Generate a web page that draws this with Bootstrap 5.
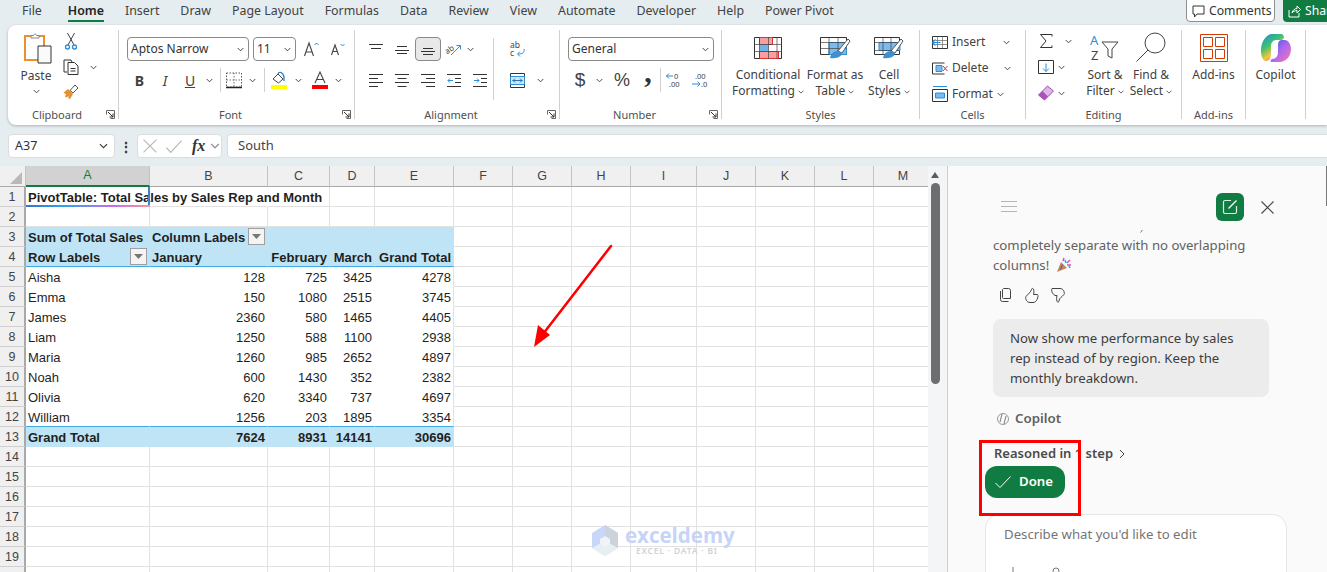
<!DOCTYPE html>
<html lang="en">
<head>
<meta charset="UTF-8" />
<title>PivotTable - Excel</title>
<link href="https://cdn.jsdelivr.net/npm/bootstrap@5.3.0/dist/css/bootstrap.min.css" rel="stylesheet" />
<style>
  html, body { height: 100%; overflow: hidden; }
  body { background: #e6edf0; font-family: "Noto Sans", sans-serif; font-size: 12px; color: #424242; width: 1327px; height: 572px; position: relative; }
  svg { display: block; flex: none; overflow: visible; }

  /* top tabs */
  .tabbar { height: 25px; padding-left: 22px; }
  .tabbar .nav-link { padding: 0; margin-right: 21px; height: 22px; line-height: 21px; color: #424242; font-size: 12.4px; }
  .tabbar .nav-item:first-child .nav-link { margin-right: 26px; }
  .tabbar .nav-link.active { color: #242424; font-weight: 600; border-bottom: 2px solid #107c41; }
  .btn-comments { position: absolute; left: 1186px; top: -3px; width: 89px; height: 25px; padding: 3px 0 0 5px; background: #fff; border: 1px solid #8f8f8f; border-radius: 4px; font-size: 12.2px; color: #333; line-height: 20px; }
  .btn-share { position: absolute; left: 1283px; top: -3px; width: 60px; height: 25px; padding: 3px 0 0 5px; background: #107c41; border-radius: 4px; font-size: 12.2px; color: #fff; line-height: 20px; }

  /* ribbon */
  .ribbon { display: flex; height: 100px; margin-left: 8px; padding: 5px 0 6px; background: #fff; border-radius: 8px 0 0 8px; box-shadow: 0 1px 3px rgba(0,0,0,.25); }
  .rgroup { position: relative; display: flex; flex-direction: column; flex: none; border-right: 1px solid #d0d0d0; }
  .rbody { flex: 1 1 auto; min-height: 0; }
  .rlabel { height: 14px; line-height: 14px; margin: -1px 0 -3px; text-align: center; font-size: 11px; color: #505050; }
  .rlabel-pad { padding-right: 12px; }
  .launcher { position: absolute; right: 3px; bottom: 0; }
  .g-clip { width: 111px; } .g-font { width: 236px; } .g-align { width: 205px; } .g-num { width: 162px; }
  .g-styles { width: 198px; } .g-cells { width: 106px; } .g-edit { width: 156px; } .g-addin { width: 64px; } .g-copilot { width: 60px; }
  .ctext { font-size: 12px; line-height: 16px; color: #424242; text-align: center; white-space: nowrap; }
  .big { display: flex; flex-direction: column; align-items: center; }
  .xlsel { display: flex; align-items: center; justify-content: space-between; height: 24px; background: #fff; border: 1px solid #8a8a8a; border-radius: 4px; padding: 0 4px 0 3px; font-size: 12px; color: #333; }
  .tb { display: flex; align-items: center; justify-content: center; flex: none; height: 24px; color: #424242; font-size: 14px; }
  .vsep { width: 1px; height: 24px; background: #d0d0d0; flex: none; }
  .tb-on { background: #e8e8e8; border: 1px solid #8a8a8a; border-radius: 4px; }
  .rowtop { height: 24px; margin-top: 7px; }
  .rowlow { height: 24px; margin-top: 7px; }
  .w14 { width: 14px; } .w16 { width: 16px; } .w20 { width: 20px; } .w22 { width: 22px; } .w24 { width: 24px; } .w25 { width: 25px; } .w26 { width: 26px; } .w28 { width: 28px; }
  .w8 { width: 8px; }
  .clip-paste { width: 51px; padding-left: 5px; }
  .paste-ico { margin: 3px 0 5px 4px; }
  .paste-chev { margin-top: 5px; }
  .clip-small { width: 24px; padding-top: 3px; gap: 9px; }
  .clip-chev { margin: 35px 0 0 7px; }
  .chev-back { margin-left: -4px; }
  .merge-chev { margin-left: 12px; }
  .cur-glyph { font-family: "Liberation Sans", sans-serif; font-size: 19px; }
  .pct-glyph { font-family: "Liberation Sans", sans-serif; font-size: 18px; margin-left: 2px; }
  .comma-glyph { font-family: "Liberation Serif", serif; font-weight: 700; font-size: 30px; line-height: 0; padding-bottom: 16px; color: #333; }
  .ico-st { margin: 7px 0 8px; }
  .ico-ed { margin: 3px 0 5px; }
  .ico-ad { margin: 4px 0 5px; }
  .cell-stack { margin-top: -1px; }
  .ed-stack { margin-top: -2px; padding-left: 12px; width: 56px; }
  .cell-row { height: 26px; padding-left: 12px; font-size: 12px; gap: 4px; color: #424242; }
  .ed-row { height: 26px; }
  .chev-ins { margin-left: 14px; } .chev-del { margin-left: 11px; } .chev-fmt { margin-left: 0; }
  .sig { margin-left: 2px; } .chev-sig { margin-left: 13px; } .chev-ed { margin-left: 4px; }

  /* formula bar */
  .fbar { height: 24px; margin: 9px 0 8px 8px; gap: 0; }
  .fbox { height: 24px; background: #fff; border: 1px solid #dcdcdc; border-radius: 4px; flex: none; }
  .namebox { width: 107px; padding: 0 6px 0 6px; font-size: 12.5px; color: #333; }
  .fnbtns { width: 85px; margin-left: 9px; padding-left: 5px; }
  .fxinput { width: 1120px; margin-left: 5px; padding-left: 10px; font-size: 13px; color: #444; }
  .fn-dots { width: 22px; font-size: 14px; font-weight: 700; color: #333; text-align: center; margin-right: -9px; flex: none; }
  .fx { font-family: "Liberation Serif", serif; font-style: italic; font-weight: 700; font-size: 16px; color: #333; margin: 0 5px 0 9px; }

  /* sheet */
  .main { height: 406px; }
  .sheet-wrap { width: 928px; height: 406px; overflow: hidden; background: #fff; flex: none; }
  .xl-sheet { table-layout: fixed; border-collapse: separate; border-spacing: 0; width: 908px; font-family: "Liberation Sans", sans-serif; font-size: 13px; color: #1f1f1f; }
  .xl-sheet td, .xl-sheet th { height: 20px; padding: 2px 2px 0 2px; line-height: 17px; white-space: nowrap; border-right: 1px solid #e1e1e1; border-bottom: 1px solid #e1e1e1; font-weight: 400; }
  .xl-sheet thead th { text-align: center; background: #f0f0f0; color: #444; font-size: 12.5px; border-right: 1px solid #c4c4c4; border-bottom: 1px solid #a9a9a9; padding: 0; line-height: 19px; }
  .xl-sheet thead th.col-on { background: #d2d2d2; color: #107c41; border-bottom: 2px solid #107c41; }
  .xl-sheet thead th.corner { position: relative; }
  .xl-sheet .rowhead { background: #f0f0f0; text-align: center; color: #444; font-size: 12.5px; padding: 2px 0 0; border-right: 2px solid #a9a9a9; border-bottom: 1px solid #cfcfcf; }
  .xl-sheet td.plain { border-color: #fff; }
  .xl-sheet td.noline-r { border-right-color: #fff; }
  .xl-sheet td.edge { border-right-color: #e1e1e1; border-bottom-color: #fff; }
  .xl-sheet td.pv { background: #bfe4f6; border-right-color: #bfe4f6; border-bottom-color: #bfe4f6; font-weight: 700; }
  .xl-sheet td.pv-end { border-bottom-color: #3fa9e6; }
  .xl-sheet td.before-total { border-bottom-color: #3fa9e6; }
  .xl-sheet td.num { text-align: right; }
  .xl-sheet td.a1-cell { position: relative; font-weight: 700; }
  .a1-cell::after { content: ""; position: absolute; left: 0; right: -1px; bottom: -1px; height: 2px; background: linear-gradient(90deg, #3f6fc8, #2aa4ee 30%, #c86bf0 70%, #f59a8c); }
  .a1-cell::before { content: ""; position: absolute; right: -1px; top: 0; bottom: -1px; width: 2px; background: #3f7fd0; }
  .fltbtn { float: right; display: flex; align-items: center; justify-content: center; width: 17px; height: 17px; margin-top: -1px; background: #f4f4f4; border: 1px solid #9f9f9f; }
  .xl-corner { position: absolute; right: 3px; bottom: 2px; width: 0; height: 0; border-left: 12px solid transparent; border-bottom: 12px solid #b9b9b9; }

  .vscroll { width: 19px; height: 406px; background: #f3f5f6; flex: none; position: relative; }
  .vthumb { width: 9px; height: 201px; margin: 5px 0 0 3px; background: #6e6e6e; border-radius: 5px; }
  .varrow { width: 0; height: 0; margin: 6px 0 0 3px; border-left: 4.5px solid transparent; border-right: 4.5px solid transparent; border-bottom: 6px solid #5c5c5c; }

  /* copilot pane */
  .pane { width: 380px; height: 406px; background: #fafafa; border-left: 1px solid #c9cfd2; overflow: hidden; position: relative; font-size: 13.3px; flex: none; }
  .pane-head { height: 64px; padding: 27px 53px 0 53px; position: relative; }
  .pane-new { width: 28px; height: 28px; background: #107c41; border-radius: 6px; margin-left: auto; margin-right: 17px; }
  .pane-msg { color: #616161; line-height: 20px; padding-left: 45px; width: 340px; font-size: 13.2px; }
  .pane-tail { height: 5px; padding-left: 192px; }
  .pane-acts { gap: 8px; padding: 13px 0 0 51px; height: 44px; }
  .bubble { width: 276px; height: 78px; margin-left: 45px; padding: 9px 10px 0 17px; background: #ececec; border-radius: 8px; color: #3d3d3d; line-height: 20px; font-size: 13.2px; }
  .pane-who { height: 20px; margin: 12px 0 0 45px; gap: 6px; color: #616161; font-weight: 600; font-size: 13.3px; }
  .pane-reason { height: 18px; overflow: hidden; margin: 15px 0 0 46px; color: #4a4a4a; font-weight: 600; font-size: 13px; line-height: 19px; gap: 6px; align-items: flex-start; }
  .reason-chev { margin-top: 5px; }
  .btn-done { width: 80px; height: 32px; margin: 4px 0 0 37px; padding: 0 2px 0 0; gap: 8px; background: #107c41; border: 0; border-radius: 12px; color: #fff; font-weight: 600; font-size: 13.2px; }
  .ask-box { width: 302px; height: 100px; margin: 16px 0 0 37px; padding: 10px 18px; background: #fff; border: 1px solid #e6e6e6; border-radius: 14px; color: #757575; font-size: 13.2px; }
  .ask-tools { margin-top: 22px; gap: 38px; padding-left: 8px; }
  .red-box { position: absolute; left: 979px; top: 440px; width: 102px; height: 76px; border: 3px solid #f00; pointer-events: none; }
  .pointer-arrow { position: absolute; left: 525px; top: 240px; }
  .watermark { position: absolute; left: 591px; top: 524px; gap: 4px; pointer-events: none; }
  .wm-name { font-family: "Open Sans", sans-serif; font-weight: 700; font-size: 20.5px; line-height: 22px; color: #c6d4f7; }
  .wm-tag { font-size: 8.5px; line-height: 9px; letter-spacing: .8px; color: #cfd2d7; font-weight: 600; padding-left: 11px; }
  .pane-rail { position: absolute; right: 0; top: 0; width: 1px; height: 40px; background: #777; }
</style>
</head>
<body>
<svg width="0" height="0" class="position-absolute">
  <symbol id="chev" viewBox="0 0 8 5"><path d="M.8.8 4 4l3.2-3.2" fill="none" stroke="#444" stroke-width="1.1"/></symbol>
  <symbol id="launch" viewBox="0 0 9 9"><path d="M.5 4.5v-4h8v8h-4" fill="none" stroke="#666"/><path d="M2 2l5 5M7 3.5V7H3.5" fill="none" stroke="#333"/></symbol>
</svg>

<div class="tabbar d-flex">
  <ul class="nav flex-nowrap">
    <li class="nav-item"><a class="nav-link" href="#">File</a></li>
    <li class="nav-item"><a class="nav-link active" href="#">Home</a></li>
    <li class="nav-item"><a class="nav-link" href="#">Insert</a></li>
    <li class="nav-item"><a class="nav-link" href="#">Draw</a></li>
    <li class="nav-item"><a class="nav-link" href="#">Page Layout</a></li>
    <li class="nav-item"><a class="nav-link" href="#">Formulas</a></li>
    <li class="nav-item"><a class="nav-link" href="#">Data</a></li>
    <li class="nav-item"><a class="nav-link" href="#">Review</a></li>
    <li class="nav-item"><a class="nav-link" href="#">View</a></li>
    <li class="nav-item"><a class="nav-link" href="#">Automate</a></li>
    <li class="nav-item"><a class="nav-link" href="#">Developer</a></li>
    <li class="nav-item"><a class="nav-link" href="#">Help</a></li>
    <li class="nav-item"><a class="nav-link" href="#">Power Pivot</a></li>
  </ul>
  <div class="btn-comments d-flex align-items-center gap-1">
    <svg width="13" height="13" viewBox="0 0 13 13"><path d="M1 1h11v8H5l-2.5 3V9H1z" fill="none" stroke="#333"/></svg>
    Comments
  </div>
  <div class="btn-share d-flex align-items-center gap-1">
    <svg width="13" height="13" viewBox="0 0 13 13"><path d="M1 5v7h10V8M4 8c.5-3 3-4.500 5-4.500V1l3.500 3.500L9 8V5.500C7 5.500 5 6.500 4 8z" fill="none" stroke="#fff"/></svg>
    Share
  </div>
</div>

<!-- Ribbon -->
<div class="ribbon">
  <div class="rgroup g-clip">
    <div class="rbody d-flex">
      <div class="clip-paste big">
        <svg class="paste-ico" width="28" height="30" viewBox="0 0 28 30">
          <path d="M1 3h19v24H1z" fill="#fff" stroke="#e8912d" stroke-width="2"/>
          <path d="M7 5V2.500h2.500C10 .5 12 .5 12.500 2.500H15V5z" fill="#fff" stroke="#888"/>
          <path d="M14 13h13v17H14z" fill="#fafafa" stroke="#333"/>
        </svg>
        <span class="ctext">Paste</span>
        <svg class="paste-chev" width="7" height="5"><use href="#chev"/></svg>
      </div>
      <div class="clip-small d-flex flex-column align-items-center">
        <svg width="12" height="17" viewBox="0 0 12 17"><path d="M2.500 0 9 12M9.500 0 3 12" stroke="#444" fill="none"/><circle cx="2.500" cy="14" r="2" fill="none" stroke="#2a8ed8" stroke-width="1.300"/><circle cx="9.500" cy="14" r="2" fill="none" stroke="#2a8ed8" stroke-width="1.300"/></svg>
        <svg width="16" height="16" viewBox="0 0 16 16"><path d="M4 13H1V1h7l1 2" fill="none" stroke="#333"/><path d="M5 3.500h6.500L15 7v8.500H5z" fill="#fff" stroke="#333"/><path d="M7.500 9.500h5M7.500 12h5" stroke="#333"/></svg>
        <svg width="16" height="16" viewBox="0 0 16 16"><path d="M.5 8.500 5 5l5 5-3 5-2-1 1-2-3 1.500-1-1 1-2z" fill="#e8912d"/><path d="m7 6.500 5-5.500 3 3-5 5z" fill="none" stroke="#555"/></svg>
      </div>
      <svg class="clip-chev" width="7" height="5"><use href="#chev"/></svg>
    </div>
    <div class="rlabel rlabel-pad">Clipboard</div>
    <svg class="launcher" width="9" height="9"><use href="#launch"/></svg>
  </div>

  <div class="rgroup g-font">
    <div class="rbody ps-2">
      <div class="d-flex align-items-center rowtop">
        <div class="xlsel" style="width:122px">Aptos Narrow <svg width="7" height="5"><use href="#chev"/></svg></div>
        <div class="xlsel ms-1" style="width:43px">11 <svg width="7" height="5"><use href="#chev"/></svg></div>
        <svg class="ms-2" width="15" height="14" viewBox="0 0 15 14"><path d="M.5 14 5 1l4.500 13M2 10h6" fill="none" stroke="#444" stroke-width="1.100"/><path d="m10.500 3 2-2 2 2" fill="none" stroke="#2a8ed8"/></svg>
        <svg class="ms-2 ps-1" width="18" height="12" viewBox="0 0 14 12"><path d="M.5 12 4 2l3.500 10M1.800 8.500h4.500" fill="none" stroke="#444" stroke-width="1.100"/><path d="m9.500 1 2 2 2-2" fill="none" stroke="#2a8ed8"/></svg>
      </div>
      <div class="d-flex align-items-center rowlow">
        <div class="tb w25 fw-bold">B</div>
        <div class="tb w26 fst-italic">I</div>
        <div class="tb w24 text-decoration-underline">U</div>
        <div class="tb w14"><svg width="7" height="5"><use href="#chev"/></svg></div>
        <div class="tb w8"><span class="vsep"></span></div>
        <div class="tb w20"><svg width="16" height="17" viewBox="0 0 16 17"><path d="M.5 1h15v14H.5z" fill="none" stroke="#555" stroke-dasharray="1.500 1.500"/><path d="M.5 8h15M8 1v14" stroke="#777" stroke-dasharray="1.500 1.500"/><path d="M0 15.500h16" stroke="#222" stroke-width="1.500"/></svg></div>
        <div class="tb w16"><svg width="7" height="5"><use href="#chev"/></svg></div>
        <div class="tb w8"><span class="vsep"></span></div>
        <div class="tb w22"><svg width="16" height="18" viewBox="0 0 16 18"><path d="m2 8 5-5 5 5-4.500 4z" fill="#fff" stroke="#444"/><path d="M7 3c1-3 5-2 6 3v4" fill="none" stroke="#1f7fcc" stroke-width="1.300"/><path d="M0 14h16v4H0z" fill="#ff0"/></svg></div>
        <div class="tb w16"><svg width="7" height="5"><use href="#chev"/></svg></div>
        <div class="tb w28"><svg width="16" height="18" viewBox="0 0 16 18"><path d="M3 12 8 1l5 11M4.500 8.500h7" fill="none" stroke="#444" stroke-width="1.100"/><path d="M0 14h16v4H0z" fill="#f00"/></svg></div>
        <div class="tb w8"><svg width="7" height="5"><use href="#chev"/></svg></div>
      </div>
    </div>
    <div class="rlabel rlabel-pad">Font</div>
    <svg class="launcher" width="9" height="9"><use href="#launch"/></svg>
  </div>

  <div class="rgroup g-align">
    <div class="rbody d-flex ps-2">
      <div class="al-left flex-none" style="width:134px">
        <div class="d-flex align-items-center rowtop">
          <div class="tb w26"><svg width="14" height="10" viewBox="0 0 14 10"><path d="M0 .5h14M2 4.500h10" stroke="#333"/></svg></div>
          <div class="tb w26"><svg width="14" height="10" viewBox="0 0 14 10"><path d="M2 2.500h10M0 6.500h14M2 9.500h10" stroke="#333"/></svg></div>
          <div class="tb w26 tb-on"><svg width="14" height="12" viewBox="0 0 14 12"><path d="M2 5.500h10M0 8.500h14M2 11.500h10" stroke="#333"/></svg></div>
          <div class="tb w26"><svg width="16" height="14" viewBox="0 0 16 14"><text x="-1" y="10" font-size="8" fill="#444" transform="rotate(-35 4 8)">ab</text><path d="m5 13 9-9M10.500 3.500h4v4" fill="none" stroke="#2a8ed8"/></svg></div>
          <div class="tb w14 chev-back"><svg width="7" height="5"><use href="#chev"/></svg></div>
        </div>
        <div class="d-flex align-items-center rowlow">
          <div class="tb w26"><svg width="14" height="13" viewBox="0 0 14 13"><path d="M0 .5h14M0 4.500h9M0 8.500h14M0 12.500h9" stroke="#333"/></svg></div>
          <div class="tb w26"><svg width="14" height="13" viewBox="0 0 14 13"><path d="M0 .5h14M2.500 4.500h9M0 8.500h14M2.500 12.500h9" stroke="#333"/></svg></div>
          <div class="tb w26"><svg width="14" height="13" viewBox="0 0 14 13"><path d="M0 .5h14M5 4.500h9M0 8.500h14M5 12.500h9" stroke="#333"/></svg></div>
          <div class="tb w26"><svg width="14" height="13" viewBox="0 0 14 13"><path d="M0 .5h14M8 4.500h6M8 8.500h6M0 12.500h14" stroke="#333"/><path d="M6 6.500H1M3 4.500l-2 2 2 2" fill="none" stroke="#2a8ed8"/></svg></div>
          <div class="tb w26"><svg width="14" height="13" viewBox="0 0 14 13"><path d="M0 .5h14M8 4.500h6M8 8.500h6M0 12.500h14" stroke="#333"/><path d="M1 6.500h5M4 4.500l2 2-2 2" fill="none" stroke="#2a8ed8"/></svg></div>
        </div>
      </div>
      <div class="vsep mt-2" style="height:62px"></div>
      <div class="ms-3 d-flex flex-column" style="width:50px">
        <div class="rowtop tb justify-content-start"><svg width="15" height="16" viewBox="0 0 15 16"><text x="0" y="7" font-size="8.500" fill="#444">ab</text><text x="0" y="15" font-size="8.500" fill="#444">c</text><path d="M14 8c1 4-2 5-6 5M10 10.500 7.500 13l2.500 2.500" fill="none" stroke="#2a8ed8"/></svg></div>
        <div class="rowlow d-flex align-items-center">
          <svg width="15" height="15" viewBox="0 0 15 15"><path d="M.5.5h14v14H.5z" fill="#fff" stroke="#333"/><path d="M.5 3.500h14v8H.5z" fill="#cde8f9" stroke="#2a8ed8"/><path d="M2.500 7.500h10M5 5.500l-2 2 2 2M10 5.500l2 2-2 2" fill="none" stroke="#2a6fb8"/></svg>
          <svg class="merge-chev" width="7" height="5"><use href="#chev"/></svg>
        </div>
      </div>
    </div>
    <div class="rlabel rlabel-pad">Alignment</div>
    <svg class="launcher" width="9" height="9"><use href="#launch"/></svg>
  </div>

  <div class="rgroup g-num">
    <div class="rbody ps-2">
      <div class="d-flex align-items-center rowtop">
        <div class="xlsel" style="width:146px">General <svg width="7" height="5"><use href="#chev"/></svg></div>
      </div>
      <div class="d-flex align-items-center rowlow">
        <div class="tb w24 cur-glyph">$</div>
        <div class="tb w14"><svg width="7" height="5"><use href="#chev"/></svg></div>
        <div class="tb w28 pct-glyph">%</div>
        <div class="tb w24 comma-glyph">,</div>
        <span class="vsep"></span>
        <div class="tb w26"><svg width="16" height="16" viewBox="0 0 16 16"><text x="8" y="7" font-size="7.500" fill="#444">0</text><text x="3" y="15" font-size="7.500" fill="#444">.00</text><path d="M7 4H0M3 1.500.5 4 3 6.500" fill="none" stroke="#2a8ed8"/></svg></div>
        <div class="tb w26"><svg width="16" height="16" viewBox="0 0 16 16"><text x="3" y="7" font-size="7.500" fill="#444">.00</text><text x="9" y="15" font-size="7.500" fill="#444">.0</text><path d="M0 12h8M5.500 9.500 8 12l-2.500 2.500" fill="none" stroke="#2a8ed8"/></svg></div>
      </div>
    </div>
    <div class="rlabel rlabel-pad">Number</div>
    <svg class="launcher" width="9" height="9"><use href="#launch"/></svg>
  </div>

  <div class="rgroup g-styles">
    <div class="rbody d-flex ps-2">
      <div class="big ms-1" style="width:68px">
        <svg class="ico-st" width="28" height="22" viewBox="0 0 28 22"><path d="M.5.500h27v21H.5z" fill="#fff" stroke="#333"/><path d="M5.500.5h13v7h-13zM5.500 14.500h19v7h-19z" fill="#f8a0a0" stroke="#e03030"/><path d="M5.500 7.500h9v7h-9z" fill="#6eb4ea"/><path d="M5.500 0v22M14.500 0v22M23 0v22M0 7.500h28M0 14.500h28" stroke="#444" fill="none" stroke-width=".7"/></svg>
        <span class="ctext">Conditional</span>
        <span class="ctext">Formatting <svg class="d-inline" width="6" height="4"><use href="#chev"/></svg></span>
      </div>
      <div class="big" style="width:66px">
        <svg class="ico-st" width="30" height="22" viewBox="0 0 30 22"><path d="M.5.500h26v17H.5z" fill="#fff" stroke="#333"/><path d="M9 5.500h17.500v12H9z" fill="#7dbbee" stroke="#2a8ed8"/><path d="M.5 5.500h26M.5 11.500h26M9 .5v17M18 .5v17" stroke="#444" stroke-width=".7"/><path d="M18 14 28 2l2 2-8 12z" fill="#fff" stroke="#555"/><path d="M10 21c1-4 3-7 8-7l4 2c0 3-4 6-12 5z" fill="#3c8fd0"/></svg>
        <span class="ctext">Format as</span>
        <span class="ctext">Table <svg class="d-inline" width="6" height="4"><use href="#chev"/></svg></span>
      </div>
      <div class="big" style="width:42px">
        <svg class="ico-st" width="30" height="22" viewBox="0 0 30 22"><path d="M.5.500h25v17H.5z" fill="#fff" stroke="#333"/><path d="M5 5.500h21v8H5z" fill="#7dbbee" stroke="#2a8ed8"/><path d="M.5 5.500h25M.5 13.500h25M9 .5v17M17 .5v17" stroke="#444" stroke-width=".7"/><path d="M17 14 27 2l2 2-8 12z" fill="#fff" stroke="#555"/><path d="M9 21c1-4 3-7 8-7l4 2c0 3-4 6-12 5z" fill="#3c8fd0"/></svg>
        <span class="ctext">Cell</span>
        <span class="ctext">Styles <svg class="d-inline" width="6" height="4"><use href="#chev"/></svg></span>
      </div>
    </div>
    <div class="rlabel">Styles</div>
  </div>

  <div class="rgroup g-cells">
    <div class="rbody cell-stack">
      <div class="d-flex align-items-center cell-row"><svg width="16" height="13" viewBox="0 0 16 13"><path d="M.5.500h15v12H.5z" fill="#fff" stroke="#333"/><path d="M5.500.5v12M10.500.5v12M.5 4.500h15M.5 8.500h15" stroke="#666" stroke-width=".7"/><path d="M.5 6.500h8M3.500 3.500l-3 3 3 3" fill="#fff" stroke="#2a8ed8" stroke-width="1.200"/></svg>Insert<svg class="chev-ins" width="7" height="5"><use href="#chev"/></svg></div>
      <div class="d-flex align-items-center cell-row"><svg width="16" height="13" viewBox="0 0 16 13"><path d="M.5 1h12M.5 12h12M.5 1v11" stroke="#333" fill="none"/><path d="M4 3.500h6v6H4z" fill="#7dbbee" stroke="#2a8ed8"/><path d="m11 4 4.500 5M15.500 4 11 9" stroke="#e03030" fill="none"/></svg>Delete<svg class="chev-del" width="7" height="5"><use href="#chev"/></svg></div>
      <div class="d-flex align-items-center cell-row"><svg width="16" height="16" viewBox="0 0 16 16"><path d="M.5 3.500h15v12H.5z" fill="#fff" stroke="#333"/><path d="M3.500 7h9v5h-9z" fill="#7dbbee" stroke="#2a8ed8"/><path d="M1 .5h14" stroke="#2a8ed8"/></svg>Format<svg class="chev-fmt" width="7" height="5"><use href="#chev"/></svg></div>
    </div>
    <div class="rlabel">Cells</div>
  </div>

  <div class="rgroup g-edit">
    <div class="rbody d-flex">
      <div class="d-flex flex-column ed-stack">
        <div class="d-flex align-items-center ed-row"><svg class="sig" width="12" height="14" viewBox="0 0 12 14"><path d="M12 2.500V.5H.5L6 7 .5 13.500H12v-2" fill="none" stroke="#333"/></svg><svg class="chev-sig" width="7" height="5"><use href="#chev"/></svg></div>
        <div class="d-flex align-items-center ed-row"><svg width="16" height="14" viewBox="0 0 16 14"><path d="M.5.500h15v13H.5z" fill="none" stroke="#333"/><path d="M8 3.500v8M5 8.500l3 3 3-3" fill="none" stroke="#2a8ed8"/></svg><svg class="chev-ed" width="7" height="5"><use href="#chev"/></svg></div>
        <div class="d-flex align-items-center ed-row"><svg width="16" height="16" viewBox="0 0 16 16"><path d="m.5 10 9-9L15.500 6l-9 9z" fill="#e0b6e8" stroke="#9a4ea8"/><path d="m.5 10 4-4 5.500 5.500-3.500 3.500z" fill="#a855b8"/></svg><svg class="chev-ed" width="7" height="5"><use href="#chev"/></svg></div>
      </div>
      <div class="big" style="width:46px">
        <svg class="ico-ed" width="30" height="29" viewBox="0 0 30 29"><text x="0" y="12" font-size="13" fill="#2a8ed8">A</text><text x="1" y="27" font-size="13" fill="#444">Z</text><path d="M12 9h16l-6 7v9l-4-2v-7z" fill="#fff" stroke="#444"/></svg>
        <span class="ctext">Sort &amp;</span>
        <span class="ctext">Filter <svg class="d-inline" width="6" height="4"><use href="#chev"/></svg></span>
      </div>
      <div class="big" style="width:46px">
        <svg class="ico-ed" width="30" height="29" viewBox="0 0 30 29"><circle cx="19" cy="10" r="10" fill="#fff" stroke="#444"/><path d="M12 17 .5 28.500" stroke="#444"/></svg>
        <span class="ctext">Find &amp;</span>
        <span class="ctext">Select <svg class="d-inline" width="6" height="4"><use href="#chev"/></svg></span>
      </div>
    </div>
    <div class="rlabel">Editing</div>
  </div>

  <div class="rgroup g-addin">
    <div class="rbody big">
      <svg class="ico-ad" width="28" height="28" viewBox="0 0 28 28"><path d="M.5.500h27v27H.5z" fill="none" stroke="#d83b01"/><path d="M3.500 3.500h9v9h-9zM15.500 3.500h9v9h-9zM3.500 15.500h9v9h-9zM15.500 15.500h9v9h-9z" fill="none" stroke="#d83b01"/></svg>
      <span class="ctext">Add-ins</span>
    </div>
    <div class="rlabel">Add-ins</div>
  </div>

  <div class="rgroup g-copilot">
    <div class="rbody big">
      <svg class="ico-ad" width="30" height="28" viewBox="0 0 30 28">
        <defs>
          <linearGradient id="cpA" x1="0" y1="0" x2=".6" y2="1"><stop offset="0" stop-color="#1b8be0"/><stop offset=".45" stop-color="#3fc16f"/><stop offset=".75" stop-color="#f7c83a"/><stop offset="1" stop-color="#f0628a"/></linearGradient>
          <linearGradient id="cpB" x1="0" y1="0" x2="1" y2="1"><stop offset="0" stop-color="#2a5fe0"/><stop offset=".5" stop-color="#b066f0"/><stop offset="1" stop-color="#f57aa8"/></linearGradient>
        </defs>
        <path d="M11 0h9c2 0 3 2 3 4l-2 2h-6c-3 0-5 3-5 6v6c0 5-1 9-5 9-3 0-5-4-5-11C0 7 6 0 11 0z" fill="url(#cpA)"/>
        <path d="M21 6h3c3 0 6 4 6 9 0 8-6 13-11 13h-8c-2 0-2-2 0-3 4 0 6-3 6-7v-6c0-4 1-6 4-6z" fill="url(#cpB)"/>
      </svg>
      <span class="ctext">Copilot</span>
    </div>
  </div>
</div>

<!-- Formula bar -->
<div class="fbar d-flex align-items-center">
  <div class="fbox namebox d-flex align-items-center justify-content-between">A37 <svg width="9" height="6"><use href="#chev"/></svg></div>
  <div class="fn-dots">&#8942;</div>
  <div class="fbox fnbtns d-flex align-items-center">
    <svg width="14" height="14" viewBox="0 0 13 13"><path d="m.5.5 12 12M12.500.5l-12 12" stroke="#b5b5b5" fill="none"/></svg>
    <svg class="ms-2" width="18" height="13" viewBox="0 0 15 12"><path d="m.5 7 4 4.500L14.500.5" stroke="#b5b5b5" fill="none"/></svg>
    <span class="fx">fx</span>
    <svg width="10" height="6" opacity=".55"><use href="#chev"/></svg>
  </div>
  <div class="fbox fxinput d-flex align-items-center">South</div>
</div>

<div class="main d-flex">
  <div class="sheet-wrap"><table class="xl-sheet" id="sheet"></table></div>
  <div class="vscroll">
    <div class="varrow"></div>
    <div class="vthumb"></div>
  </div>
  <div class="pane">
    <div class="pane-rail"></div>
    <div class="pane-head d-flex">
      <svg class="mt-2" width="16" height="11" viewBox="0 0 16 11"><path d="M0 .5h16M0 5.500h16M0 10.500h16" stroke="#b5b5b5"/></svg>
      <div class="pane-new d-flex align-items-center justify-content-center">
        <svg width="16" height="16" viewBox="0 0 16 16"><path d="M9 1.500H3A1.500 1.500 0 0 0 1.500 3v10A1.500 1.500 0 0 0 3 14.500h10a1.500 1.500 0 0 0 1.500-1.500V7" fill="none" stroke="#dcefe5" stroke-width="1.200"/><path d="M6.500 9.500 14.500 1.500" stroke="#fff" stroke-width="1.300"/></svg>
      </div>
      <svg class="mt-2" width="13" height="13" viewBox="0 0 13 13"><path d="m.5.5 12 12M12.500.5l-12 12" stroke="#444" fill="none" stroke-width="1.100"/></svg>
    </div>
    <div class="pane-tail"><svg width="3" height="3" viewBox="0 0 3 3"><path d="M2.500 0 .5 2.500" stroke="#777" fill="none"/></svg></div>
    <div class="pane-msg">completely separate with no overlapping<br />
      <span class="d-inline-flex align-items-center gap-2">columns!
        <svg width="14" height="14" viewBox="0 0 14 14"><path d="M0 14 4 4l6 6z" fill="#c78a4a"/><path d="M3 11l2-5 1 1-2 5z" fill="#6a5acd"/><path d="M6 3l1-3M10 5l3-3M10 7h4" stroke="#e04fb0" stroke-width="1.500" fill="none"/><path d="M8 2l1 3M12 8l1 2" stroke="#2fa8e0" stroke-width="1.500" fill="none"/></svg>
      </span>
    </div>
    <div class="pane-acts d-flex">
      <svg width="14" height="14" viewBox="0 0 12 14"><path d="M3.500.5h5A2 2 0 0 1 10.500 2.500v8H3.500a1 1 0 0 1-1-1v-8z" fill="none" stroke="#444"/><path d="M.5 3v8.500a2 2 0 0 0 2 2h6" fill="none" stroke="#444"/></svg>
      <svg class="ms-1" width="14" height="15" viewBox="0 0 14 15"><path d="M1 8.500c-1 2 .5 6 4 6h3c2 0 3-1 4-3 1-2 1.500-4 .5-5H8.500c.5-2 .5-4 0-5.500-1-1-2-.5-2 .5C6 4 3 6 1 8.500z" fill="none" stroke="#444"/></svg>
      <svg class="ms-1" width="14" height="15" viewBox="0 0 14 15"><path d="M13 6.500c1-2-.5-6-4-6H1c-1 2 0 5 3 7h2c-.5 2-.5 4 0 6 1 1 2 .5 2-.5 0-3 3-4 5-6.500z" fill="none" stroke="#444"/></svg>
    </div>
    <div class="bubble">Now show me performance by sales<br />rep instead of by region. Keep the<br />monthly breakdown.</div>
    <div class="pane-who d-flex align-items-center">
      <svg class="ms-1" width="12" height="12" viewBox="0 0 12 12"><circle cx="6" cy="6" r="5.500" fill="none" stroke="#9a9a9a"/><path d="M5 1 3 9M9 3l-2 8" stroke="#7a7a7a" fill="none"/></svg>
      <span>Copilot</span>
    </div>
    <div class="pane-reason d-flex">Reasoned in 1 step
      <svg class="reason-chev" width="6" height="10" viewBox="0 0 6 10"><path d="m1 1 4 4-4 4" fill="none" stroke="#444"/></svg>
    </div>
    <button class="btn-done btn d-flex align-items-center justify-content-center">
      <svg width="16" height="12" viewBox="0 0 16 12"><path d="m.5 7 4.500 4.500L15.500.5" fill="none" stroke="#fff"/></svg>
      Done
    </button>
    <div class="ask-box">Describe what you'd like to edit
      <div class="ask-tools d-flex">
        <svg width="2" height="14"><path d="M1 0v14" stroke="#777"/></svg>
        <svg width="8" height="14" viewBox="0 0 8 14"><circle cx="4" cy="4" r="3" fill="none" stroke="#777"/><path d="M4 7v7" stroke="#777"/></svg>
      </div>
    </div>
  </div>
</div>

<!-- overlays -->
<svg class="pointer-arrow" width="95" height="115" viewBox="0 0 95 115"><path d="M86 6 18 94" stroke="#f00" stroke-width="2.500" stroke-linecap="round"/><path d="M9 107 13 85 25 95z" fill="#f00"/></svg>
<div class="watermark d-flex align-items-start">
  <svg width="30" height="34" viewBox="0 0 30 34"><path d="M14 1 1 9v15l13 8 13-8V9z" fill="#c8d6f8"/><path d="M14 1l13 8v15L14 17z" fill="#cdd3da"/><path d="M1 24l13-7 13 7-13 8z" fill="#e8eff2"/><path d="M14 12l5 3v5l-5 3-5-3v-5z" fill="#f0f3f8"/></svg>
  <div>
    <div class="wm-name">exceldemy</div>
    <div class="wm-tag">EXCEL · DATA · BI</div>
  </div>
</div>
<div class="red-box"></div>

<script>
  const columns = [
    ["A", 124], ["B", 118], ["C", 62], ["D", 45], ["E", 79], ["F", 59], ["G", 59],
    ["H", 59], ["I", 66], ["J", 59], ["K", 59], ["L", 59], ["M", 59],
  ];
  const reps = [
    ["Aisha", 128, 725, 3425, 4278], ["Emma", 150, 1080, 2515, 3745], ["James", 2360, 580, 1465, 4405],
    ["Liam", 1250, 588, 1100, 2938], ["Maria", 1260, 985, 2652, 4897], ["Noah", 600, 1430, 352, 2382],
    ["Olivia", 620, 3340, 737, 4697], ["William", 1256, 203, 1895, 3354],
  ];
  const arrowBtn = '<span class="fltbtn"><svg width="9" height="5" viewBox="0 0 9 5"><path d="M0 0h9L4.500 5z" fill="#777"/></svg></span>';
  const blanks = (n) => '<td></td>'.repeat(n);

  let html = '<colgroup><col style="width:26px">' + columns.map((c) => `<col style="width:${c[1]}px">`).join("") + "</colgroup>";
  html += '<thead><tr><th class="corner"><span class="xl-corner"></span></th>' +
    columns.map((c, i) => `<th class="${i === 0 ? "col-on" : ""}">${c[0]}</th>`).join("") + "</tr></thead><tbody>";

  const rows = [];
  rows.push('<td class="a1-cell noline-r">PivotTable: Total Sales by Sales Rep and Month</td><td class="noline-r"></td><td></td><td></td><td></td>');
  rows.push(blanks(5));
  rows.push('<td class="pv">Sum of Total Sales</td><td class="pv">Column Labels' + arrowBtn + '</td><td class="pv"></td><td class="pv"></td><td class="pv"></td>');
  rows.push('<td class="pv pv-end">Row Labels' + arrowBtn + '</td><td class="pv pv-end">January</td><td class="pv pv-end num">February</td><td class="pv pv-end num">March</td><td class="pv pv-end num">Grand Total</td>');
  reps.forEach((r, idx) => {
    const last = idx === reps.length - 1 ? " before-total" : "";
    rows.push(`<td class="plain${last}">${r[0]}</td>` +
      r.slice(1).map((v, k) => `<td class="num ${k === 3 ? "edge" : "plain"}${last}">${v}</td>`).join(""));
  });
  rows.push('<td class="pv">Grand Total</td><td class="pv num">7624</td><td class="pv num">8931</td><td class="pv num">14141</td><td class="pv num">30696</td>');
  for (let i = 14; i <= 20; i++) rows.push(blanks(5));

  rows.forEach((cells, i) => {
    html += `<tr><td class="rowhead">${i + 1}</td>${cells}${blanks(8)}</tr>`;
  });
  document.getElementById("sheet").innerHTML = html + "</tbody>";
</script>
<script src="https://cdn.jsdelivr.net/npm/bootstrap@5.3.0/dist/js/bootstrap.bundle.min.js"></script>
</body>
</html>
